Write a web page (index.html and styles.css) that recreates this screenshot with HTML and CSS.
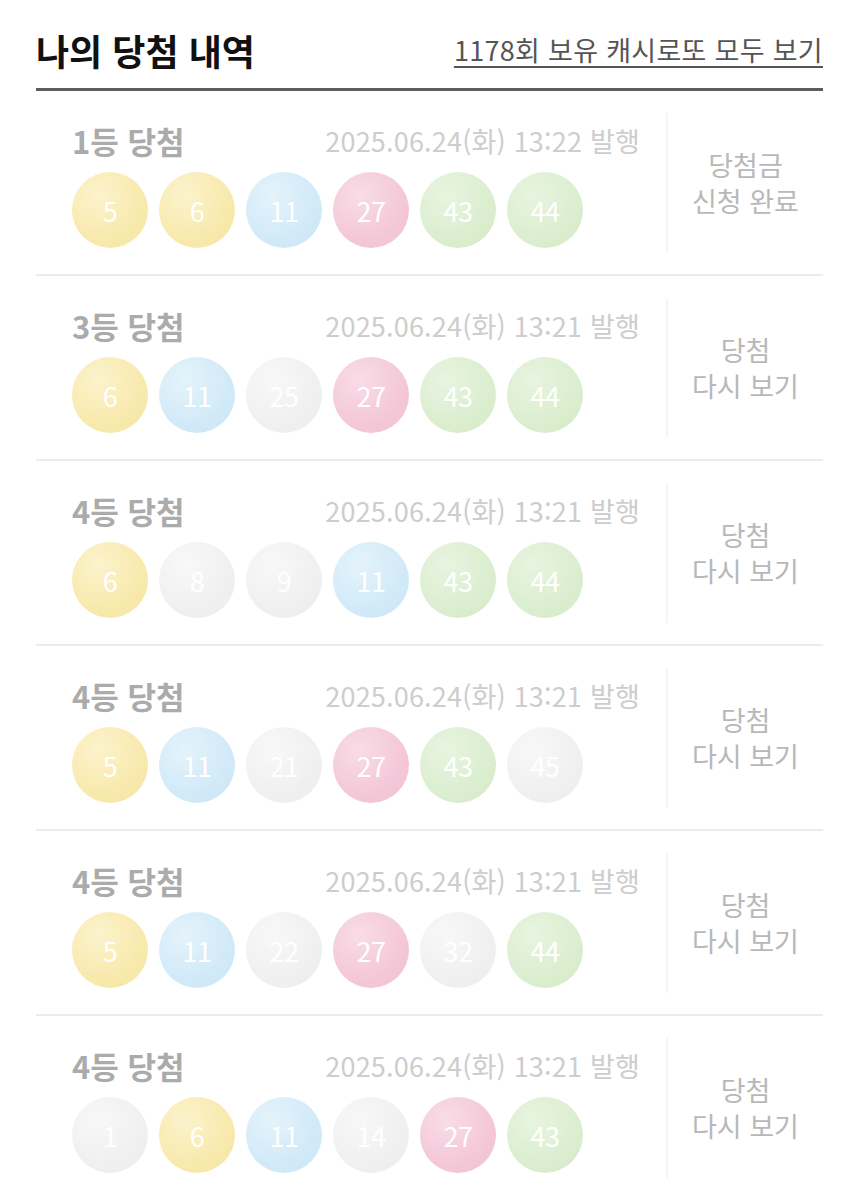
FILE: index.html
```html
<!DOCTYPE html>
<html lang="ko">
<head>
<meta charset="utf-8">
<title>나의 당첨 내역</title>
<link rel="stylesheet" href="styles.css">
</head>
<body>
<div class="page">
  <header class="head">
    <h1 class="title">나의 당첨 내역</h1>
    <a class="more" href="#">1178회 보유 캐시로또 모두 보기</a>
  </header>

  <section class="row">
    <div class="main">
      <div class="meta"><span class="rank">1등 당첨</span><span class="date">2025.06.24(화) 13:22 발행</span></div>
      <div class="balls">
        <span class="ball y">5</span><span class="ball y">6</span><span class="ball b">11</span><span class="ball p">27</span><span class="ball g">43</span><span class="ball g">44</span>
      </div>
    </div>
    <div class="side"><span>당첨금<br>신청 완료</span></div>
  </section>

  <section class="row">
    <div class="main">
      <div class="meta"><span class="rank">3등 당첨</span><span class="date">2025.06.24(화) 13:21 발행</span></div>
      <div class="balls">
        <span class="ball y">6</span><span class="ball b">11</span><span class="ball n">25</span><span class="ball p">27</span><span class="ball g">43</span><span class="ball g">44</span>
      </div>
    </div>
    <div class="side"><span>당첨<br>다시 보기</span></div>
  </section>

  <section class="row">
    <div class="main">
      <div class="meta"><span class="rank">4등 당첨</span><span class="date">2025.06.24(화) 13:21 발행</span></div>
      <div class="balls">
        <span class="ball y">6</span><span class="ball n">8</span><span class="ball n">9</span><span class="ball b">11</span><span class="ball g">43</span><span class="ball g">44</span>
      </div>
    </div>
    <div class="side"><span>당첨<br>다시 보기</span></div>
  </section>

  <section class="row">
    <div class="main">
      <div class="meta"><span class="rank">4등 당첨</span><span class="date">2025.06.24(화) 13:21 발행</span></div>
      <div class="balls">
        <span class="ball y">5</span><span class="ball b">11</span><span class="ball n">21</span><span class="ball p">27</span><span class="ball g">43</span><span class="ball n">45</span>
      </div>
    </div>
    <div class="side"><span>당첨<br>다시 보기</span></div>
  </section>

  <section class="row">
    <div class="main">
      <div class="meta"><span class="rank">4등 당첨</span><span class="date">2025.06.24(화) 13:21 발행</span></div>
      <div class="balls">
        <span class="ball y">5</span><span class="ball b">11</span><span class="ball n">22</span><span class="ball p">27</span><span class="ball n">32</span><span class="ball g">44</span>
      </div>
    </div>
    <div class="side"><span>당첨<br>다시 보기</span></div>
  </section>

  <section class="row">
    <div class="main">
      <div class="meta"><span class="rank">4등 당첨</span><span class="date">2025.06.24(화) 13:21 발행</span></div>
      <div class="balls">
        <span class="ball n">1</span><span class="ball y">6</span><span class="ball b">11</span><span class="ball n">14</span><span class="ball p">27</span><span class="ball g">43</span>
      </div>
    </div>
    <div class="side"><span>당첨<br>다시 보기</span></div>
  </section>
</div>
</body>
</html>
```

FILE: styles.css
```css
html, body {
  margin: 0;
  padding: 0;
  background: #fff;
}
body {
  font-family: "Noto Sans CJK KR", "Noto Sans", sans-serif;
  color: #222;
}
.page {
  padding: 0 33px 0 36px;
}
.head {
  height: 77px;
  padding-top: 11px;
  display: flex;
  align-items: center;
  justify-content: space-between;
  border-bottom: 3px solid #5d5d5d;
}
.title {
  margin: 0;
  font-size: 36px;
  font-weight: 700;
  letter-spacing: 0;
  color: #111;
}
.more {
  font-size: 27px;
  color: #555;
  text-decoration: underline;
  text-underline-offset: 5px;
  text-decoration-thickness: 2px;
  letter-spacing: 0.3px;
}
.row {
  display: grid;
  grid-template-columns: 630px 1fr;
  height: 185px;
  border-bottom: 2px solid #ececec;
  box-sizing: border-box;
}
.main {
  padding: 28px 26px 0 36px;
}
.meta {
  height: 42px;
  display: flex;
  align-items: center;
  justify-content: space-between;
}
.rank {
  font-size: 31px;
  font-weight: 700;
  color: #ababab;
}
.date {
  font-size: 27px;
  color: #cdcdcd;
  letter-spacing: 0.2px;
}
.balls {
  margin-top: 11px;
  display: flex;
  gap: 11px;
}
.ball {
  width: 76px;
  height: 76px;
  border-radius: 50%;
  display: flex;
  align-items: center;
  justify-content: center;
  color: #fff;
  font-size: 27px;
  letter-spacing: -0.5px;
}
.ball.y { background: radial-gradient(circle at 35% 30%, #fcf3cc 0%, #f8e9ad 60%, #f6e5a3 100%); }
.ball.b { background: radial-gradient(circle at 35% 30%, #e4f3fb 0%, #d2eaf8 60%, #cbe6f6 100%); }
.ball.p { background: radial-gradient(circle at 35% 30%, #f9dce7 0%, #f4c8d8 60%, #f1c0d2 100%); }
.ball.g { background: radial-gradient(circle at 35% 30%, #e8f4e0 0%, #dbeecf 60%, #d5eac7 100%); }
.ball.n { background: radial-gradient(circle at 35% 30%, #f8f8f8 0%, #f0f0f0 60%, #ececec 100%); }
.side {
  margin: 22px 0 21px;
  border-left: 2px solid #f5f5f5;
  display: flex;
  align-items: center;
  justify-content: center;
  text-align: center;
  font-size: 27px;
  line-height: 36px;
  color: #b8b8b8;
}
```
